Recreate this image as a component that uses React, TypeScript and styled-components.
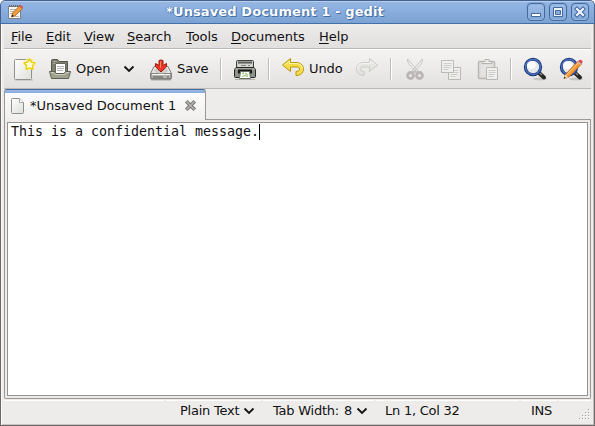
import React from "react";
import styled, { createGlobalStyle } from "styled-components";

const Global = createGlobalStyle`
  * { box-sizing: border-box; }
  html, body { margin: 0; padding: 0; background: #fff; overflow: hidden; }
  svg { display: block; flex: none; }
`;

const Window = styled.div`
  width: 595px;
  height: 426px;
  display: flex;
  flex-direction: column;
  overflow: hidden;
  border-radius: 5px 5px 0 0;
  background: #edeceb;
  color: #111;
  font: 13px/16px "DejaVu Sans", sans-serif;
  white-space: nowrap;
  cursor: default;
`;

const TitleBar = styled.header`
  height: 24px;
  flex: none;
  display: flex;
  align-items: center;
  padding: 0 5px 0 6px;
  border: 1px solid #44608c;
  border-bottom-color: #4470a9;
  border-radius: 5px 5px 0 0;
  background: linear-gradient(#b5cdee 0, #b5cdee 1px, #96b6e2 1px, #8bafdf 40%, #7ba2d2 100%);
`;

const Title = styled.h1`
  flex: 1;
  margin: 0;
  padding-right: 1px;
  text-align: center;
  font-size: 13px;
  line-height: 16px;
  font-weight: bold;
  letter-spacing: 0.11px;
  color: #fff;
  text-shadow: 1px 1px 0 #426da6, 0 0 1px #426da6, -1px 0 0 #668fc5;
`;

const WindowButtons = styled.div`
  display: flex;
  gap: 4px;
`;

const WindowButton = styled.button`
  width: 18px;
  height: 18px;
  padding: 0;
  border: 1px solid #43699f;
  border-radius: 4px;
  background: linear-gradient(#a0bfe8, #7fa5d6);
  box-shadow: inset 0 0 0 1px #94b5e1, 0 0 0 1px #85a9d9;
`;

const Body = styled.div`
  flex: 1;
  min-height: 0;
  display: flex;
  flex-direction: column;
  border: 1px solid #6b6867;
  border-top: 0;
  box-shadow: inset 1px 0 #fafafa, inset -1px -1px #c5c2c0;
  padding: 0 3px 1px;
`;

const MenuBar = styled.nav`
  height: 25px;
  flex: none;
  display: flex;
  gap: 14px;
  padding: 5px 0 0 7px;
  border-bottom: 1px solid #bab8b5;
  background: linear-gradient(#edeceb, #e1e0df);
`;

const MenuItem = styled.div<{ $w: number }>`
  width: ${(p) => p.$w}px;
  letter-spacing: -0.05px;
`;

const Mnemonic = styled.span`
  text-decoration: underline;
  text-decoration-thickness: 1px;
  text-underline-offset: 2px;
`;

const ToolBar = styled.div`
  height: 40px;
  flex: none;
  display: flex;
  align-items: center;
  padding-left: 8px;
  border-top: 1px solid #fff;
  border-bottom: 1px solid #bab8b5;
  background: linear-gradient(#f5f4f3, #e2e1e0);
`;

const ToolItem = styled.div<{ $w: number; $faded?: boolean }>`
  width: ${(p) => p.$w}px;
  height: 24px;
  flex: none;
  display: flex;
  align-items: center;
  gap: 4px;
  opacity: ${(p) => (p.$faded ? 0.55 : 1)};
`;

const ToolLabel = styled.span`
  letter-spacing: -0.1px;
`;

const Separator = styled.i`
  width: 2px;
  height: 22px;
  flex: none;
  border-left: 1px solid #bebbb8;
  border-right: 1px solid #fff;
`;

const TabStrip = styled.div`
  height: 31px;
  flex: none;
  display: flex;
`;

const Tab = styled.div`
  width: 202px;
  height: 31px;
  display: flex;
  align-items: center;
  padding: 1px 0 0 5px;
  border: 1px solid #9c9895;
  border-top-color: #49699a;
  border-bottom: 0;
  border-radius: 3px 3px 0 0;
  background: linear-gradient(#9dbce8 0, #84aadc 3px, #fcfcfc 3px, #f0efee 100%);
`;

const TabLabel = styled.span`
  width: 158px;
  padding-left: 4px;
  letter-spacing: -0.03px;
`;

const TabRest = styled.div`
  flex: 1;
  border-bottom: 1px solid #9c9895;
`;

const Notebook = styled.div`
  height: 279px;
  flex: none;
  padding: 2px;
  border: 1px solid #9c9895;
  border-top: 0;
  border-radius: 0 0 2px 2px;
`;

const Editor = styled.div`
  height: 274px;
  display: flex;
  align-items: flex-start;
  padding: 1px 2px 2px 3px;
  border: 1px solid #96928f;
  background: #fff;
  font: 13.3px/16px "DejaVu Sans Mono", monospace;
  letter-spacing: -0.007px;
`;

const Caret = styled.i`
  width: 1px;
  height: 16px;
  background: #000;
`;

const StatusBar = styled.footer`
  flex: 1;
  display: flex;
  margin-top: 1px;
  gap: 2px;
`;

const Status = styled.div<{ $w: number; $pad?: number }>`
  width: ${(p) => p.$w}px;
  flex: none;
  display: flex;
  gap: 4px;
  padding: 2px 0 0 ${(p) => p.$pad ?? 0}px;
  border-top: 1px solid #fff;
  letter-spacing: -0.24px;
`;

const StatusValue = styled.span`
  padding-left: 1px;
`;

const Grip = styled.div`
  flex: 1;
  display: flex;
  align-items: flex-end;
  justify-content: flex-end;
  padding-bottom: 3px;
  border-top: 1px solid #fff;
`;

const Chevron = () => (
  <svg width="12" height="16" viewBox="0 0 12 16">
    <path d="M1.5 5.5l4.5 4.5 4.5-4.5" fill="none" stroke="#151515" strokeWidth="1.9" />
  </svg>
);

const NotepadIcon = () => (
  <svg width="17" height="16" viewBox="0 0 17 16">
    <path d="M1.500 2.500h12v12h-12z" fill="#f7f7f3" stroke="#7c8082" />
    <path d="M2 2h11" stroke="#666" strokeDasharray="1 1" strokeWidth="2" />
    <path d="M3 5.500h7M3 7.500h5M3 9.500h3M8 12.500h4" stroke="#b7b7b4" />
    <path d="M4.500 13l1-4L12.500 2l3 2.500-7.500 7.500z" fill="#f39a3b" stroke="#9b5b21" strokeWidth=".7" />
    <path d="M12.300 2l1.300-1.300 2.700 2.300L15 4.300z" fill="#e04c50" />
    <path d="M4.500 13l.7-2.500 1.800 1.600z" fill="#29241f" />
  </svg>
);

const NewIcon = () => (
  <svg width="24" height="24" viewBox="0 0 24 24">
    <defs>
      <linearGradient id="sheet" x2="1" y2="1"><stop stopColor="#fff" /><stop offset="1" stopColor="#dededb" /></linearGradient>
    </defs>
    <path d="M3 23h18" stroke="#b9b8b5" />
    <rect x="2.5" y="2.5" width="17" height="20" rx="1" fill="url(#sheet)" stroke="#92928d" />
    <circle cx="17.5" cy="7" r="6" fill="#fff596" opacity=".65" />
    <path d="M17.500 2l1.800 3.100 3.600.8-2.400 2.700.4 3.700-3.400-1.400-3.300 1.400.3-3.700L12 5.900l3.700-.8z" fill="#fffce0" stroke="#ecd000" strokeWidth="1.4" strokeLinejoin="round" />
  </svg>
);

const OpenIcon = () => (
  <svg width="24" height="24" viewBox="0 0 24 24">
    <path d="M3.500 19V3.500q0-1 1-1h5l1.500 2h8.500V19z" fill="#7c7f6d" stroke="#54574a" />
    <path d="M5 4.500h4M5 6.500h13" stroke="#a4a698" />
    <path d="M7.500 6.500h10v10h-10z" fill="#fff" stroke="#676a5d" />
    <path d="M9 9.500h7M9 11.500h7M9 13.500h6" stroke="#b5b5ae" />
    <path d="M1.500 14.500h5l1.500 2h8l1.500-2h5L20.500 21.500h-17z" fill="#a0a38f" stroke="#5b5f50" strokeLinejoin="round" />
    <path d="M2.700 15.500h3.300l1.500 2h9l1.500-2h3.300" stroke="#c9ccbd" fill="none" />
  </svg>
);

const SaveIcon = () => (
  <svg width="24" height="24" viewBox="0 0 24 24">
    <path d="M2 22.500h20" stroke="#aaa9a6" strokeWidth="2" />
    <path d="M5 9.500h14l3.500 7V21q0 1-1 1h-19q-1 0-1-1v-4.500z" fill="#e4e4e1" stroke="#7e7f7b" />
    <path d="M2 16.500h20v5H2z" fill="#b4b5b0" stroke="#82837e" />
    <path d="M3 17.500h18" stroke="#f5f5f3" />
    <path d="M4 20h10M18 20h2" stroke="#565753" />
    <ellipse cx="12" cy="13.5" rx="7" ry="3" fill="#cdcdc8" />
    <path d="M10 3.500q2-1 4 0v5l3.500-2v3.200L12 15 6.500 9.700V6.500l3.500 2z" fill="#ee3827" stroke="#9c160d" />
    <path d="M11.500 4v7" stroke="#ff8062" />
  </svg>
);

const PrintIcon = () => (
  <svg width="24" height="24" viewBox="0 0 24 24">
    <path d="M2 22.500h20" stroke="#b5b3b0" />
    <rect x="3.5" y="3.5" width="17" height="8" rx="1" fill="#c4c6c0" stroke="#41443f" />
    <path d="M5 5.500h14" stroke="#5f645e" strokeWidth="2" />
    <path d="M5 8.500h14" stroke="#dee0d9" strokeWidth="2" />
    <path d="M8 8.500h5M15 8.500h2" stroke="#7e837b" />
    <path d="M3 10.500h18l1.500 2v7q0 1-1 1h-19q-1 0-1-1v-7z" fill="#8e918b" stroke="#252824" />
    <path d="M2.500 12h19" stroke="#b9bbb5" />
    <path d="M5 12.500h14v4H5z" fill="#171917" />
    <path d="M7.500 14.500h9l1 7h-11z" fill="#fff" stroke="#686d64" />
    <path d="M9 16.500l2-.5M12 16l3 2M9 19.500l3-1 3 1" fill="none" stroke="#99c47a" strokeWidth="1.3" />
  </svg>
);

const UndoIcon = ({ forward = false }) => (
  <svg width="24" height="24" viewBox="0 0 24 24">
    <g transform={forward ? "translate(24 0) scale(-1 1)" : undefined}>
      <path d="M9.500 1.500v4H15c5 0 7.500 3 7.500 6.500 0 4-3 6.500-7.500 6.500v-4c2.500 0 3.500-1 3.500-2.500S17.500 10 15 10H9.500v4.500L1.500 8z" fill={forward ? "#dedfd9" : "#f4dc4b"} stroke={forward ? "#adb0a8" : "#b99708"} strokeLinejoin="round" />
      <path d="M8.500 4v2.500H15c4 0 6.500 2.500 6.500 6M3.500 8l4-3" fill="none" stroke={forward ? "#fff" : "#fff7a8"} />
    </g>
  </svg>
);

const CutIcon = () => (
  <svg width="24" height="24" viewBox="0 0 24 24">
    <path d="M4.500 2c-.3 3 1.500 6 5 9l4 5 1.500-2zM19.500 2c.3 3-1.500 6-5 9l-4 5-1.500-2z" fill="#f2f2ef" stroke="#a3a39e" />
    <g fill="none" stroke="#978d8d" strokeWidth="2.8"><circle cx="7.5" cy="18.5" r="3" /><circle cx="16.5" cy="18.5" r="3" /></g>
    <path d="M10 16l2-2 2 2" fill="none" stroke="#a49b9a" strokeWidth="2" />
  </svg>
);

const CopyIcon = () => (
  <svg width="24" height="24" viewBox="0 0 24 24">
    {[[9.5, 10.5], [2.5, 3.5]].map(([x, y]) => (
      <g key={x} transform={`translate(${x} ${y})`}>
        <path d="M0 0h12v12H0z" fill="#f4f4f1" stroke="#92928c" />
        <path d="M2 3h8M2 5h8M2 7h7M2 9h5" stroke="#b5b5b0" />
      </g>
    ))}
  </svg>
);

const PasteIcon = () => (
  <svg width="24" height="24" viewBox="0 0 24 24">
    <rect x="2.5" y="4.5" width="16" height="17" rx="1" fill="#d7d5d1" stroke="#91908b" strokeWidth="1.5" />
    <path d="M6 6.500V4.500h3v-2h4v2h3v2z" fill="#e9e9e5" stroke="#85867f" />
    <path d="M5 8h11v11H5z" fill="#dfdfdc" />
    <path d="M10.500 10.500h11v12h-11z" fill="#f5f5f2" stroke="#92928c" />
    <path d="M12.500 13.500h7M12.500 15.500h7M12.500 17.500h6M12.500 19.500h5" stroke="#b5b5b0" />
  </svg>
);

const FindIcon = ({ replace = false }) => (
  <svg width="24" height="24" viewBox="0 0 24 24">
    <ellipse cx="17" cy="22" rx="7" ry="1.5" fill="#c7c5c3" />
    <path d="M15.500 15.500l5.500 5" stroke="#262824" strokeWidth="4" strokeLinecap="round" />
    <path d="M15.500 15l3.500 3" stroke="#8d908b" strokeWidth="1.2" />
    <circle cx="10" cy="10" r="7.7" fill="#e7e8e8" stroke="#1e3979" strokeWidth="3" />
    <circle cx="10" cy="10" r="7.5" fill="none" stroke="#4b70bf" strokeWidth="1.4" />
    <ellipse cx="8.5" cy="8" rx="4.5" ry="4" fill="#fff" opacity=".85" />
    {replace && (
      <>
        <path d="M5 21.500l1.500-4L19 4l3.500 3L10 20z" fill="#f49a36" stroke="#aa5b17" strokeWidth=".8" />
        <path d="M7.500 18L19.500 5.500" stroke="#ffd08b" />
        <path d="M18.500 4.700l1.500-1.500q2-1 3.500 1 .5 1-1.300 3z" fill="#e24650" />
        <path d="M18 5l1-1 3.500 3-1 1z" fill="#bfc0bd" />
        <path d="M4.700 21.800l1.500-4.300 3.300 2.800z" fill="#ead6ac" />
        <path d="M4.700 21.800l.7-2 1.500 1z" fill="#222" />
      </>
    )}
  </svg>
);

const PageIcon = () => (
  <svg width="16" height="16" viewBox="0 0 16 16">
    <defs>
      <linearGradient id="page" x2="1" y2="1"><stop stopColor="#fff" /><stop offset="1" stopColor="#dcdfd9" /></linearGradient>
    </defs>
    <path d="M2.500.5h7l4 4v10q0 1-1 1h-10q-1 0-1-1v-13q0-1 1-1z" fill="url(#page)" stroke="#8e908a" />
    <path d="M9.500.5v4h4" fill="#fff" stroke="#a7a8a3" />
  </svg>
);

const CloseIcon = () => (
  <svg width="13" height="13" viewBox="0 0 13 13">
    <path d="M2.200 2.200l8.600 8.600M10.800 2.200l-8.600 8.600" stroke="#777572" strokeWidth="3.6" />
    <path d="M2.500 2.500l8 8M10.500 2.500l-8 8" stroke="#b4b2af" strokeWidth="1.6" />
  </svg>
);

const MinimizeGlyph = () => (
  <svg width="16" height="16" viewBox="0 0 16 16"><path d="M3.500 9.500h9v3h-9z" fill="#fff" stroke="#43699f" /></svg>
);

const MaximizeGlyph = () => (
  <svg width="16" height="16" viewBox="0 0 16 16">
    <path d="M3.500 3.500h9v9h-9z" fill="#edf3fb" stroke="#43699f" />
    <path d="M5.500 6.500h5v4h-5z" fill="#8aaddd" stroke="#43699f" />
  </svg>
);

const CloseGlyph = () => (
  <svg width="16" height="16" viewBox="0 0 16 16">
    <path d="M5 5l6 6M11 5l-6 6" stroke="#43699f" strokeWidth="4.2" strokeLinecap="square" />
    <path d="M5 5l6 6M11 5l-6 6" stroke="#f1f5fb" strokeWidth="2.2" strokeLinecap="square" />
  </svg>
);

const GripDots = () => (
  <svg width="12" height="12" viewBox="0 0 12 12">
    {[[9, 0], [6, 3], [9, 3], [3, 6], [6, 6], [9, 6], [0, 9], [3, 9], [6, 9], [9, 9]].map(([x, y]) => (
      <g key={`${x}-${y}`}>
        <rect x={x + 1} y={y + 1} width="1" height="1" fill="#fff" />
        <rect x={x} y={y} width="1" height="1" fill="#a09c99" />
      </g>
    ))}
  </svg>
);

const menus: [string, number][] = [
  ["File", 21], ["Edit", 24], ["View", 29], ["Search", 45], ["Tools", 31], ["Documents", 74], ["Help", 30],
];

export default function App() {
  return (
    <Window>
      <Global />
      <TitleBar>
        <NotepadIcon />
        <Title>*Unsaved Document 1 - gedit</Title>
        <WindowButtons>
          <WindowButton aria-label="Minimize"><MinimizeGlyph /></WindowButton>
          <WindowButton aria-label="Maximize"><MaximizeGlyph /></WindowButton>
          <WindowButton aria-label="Close"><CloseGlyph /></WindowButton>
        </WindowButtons>
      </TitleBar>
      <Body>
        <MenuBar>
          {menus.map(([name, width]) => (
            <MenuItem key={name} $w={width}><Mnemonic>{name[0]}</Mnemonic>{name.slice(1)}</MenuItem>
          ))}
        </MenuBar>
        <ToolBar>
          <ToolItem $w={36}><NewIcon /></ToolItem>
          <ToolItem $w={75}><OpenIcon /><ToolLabel>Open</ToolLabel></ToolItem>
          <ToolItem $w={26}><Chevron /></ToolItem>
          <ToolItem $w={71}><SaveIcon /><ToolLabel>Save</ToolLabel></ToolItem>
          <Separator />
          <ToolItem $w={11} />
          <ToolItem $w={35}><PrintIcon /></ToolItem>
          <Separator />
          <ToolItem $w={11} />
          <ToolItem $w={74}><UndoIcon /><ToolLabel>Undo</ToolLabel></ToolItem>
          <ToolItem $w={35} $faded><UndoIcon forward /></ToolItem>
          <Separator />
          <ToolItem $w={11} />
          <ToolItem $w={36} $faded><CutIcon /></ToolItem>
          <ToolItem $w={37} $faded><CopyIcon /></ToolItem>
          <ToolItem $w={34} $faded><PasteIcon /></ToolItem>
          <Separator />
          <ToolItem $w={11} />
          <ToolItem $w={36}><FindIcon /></ToolItem>
          <ToolItem $w={24}><FindIcon replace /></ToolItem>
        </ToolBar>
        <TabStrip>
          <Tab><PageIcon /><TabLabel>*Unsaved Document 1</TabLabel><CloseIcon /></Tab>
          <TabRest />
        </TabStrip>
        <Notebook>
          <Editor>This is a confidential message.<Caret /></Editor>
        </Notebook>
        <StatusBar>
          <Status $w={160} />
          <Status $w={95} $pad={14}>Plain Text<Chevron /></Status>
          <Status $w={111} $pad={10}><span>Tab Width:</span><StatusValue>8</StatusValue><Chevron /></Status>
          <Status $w={143} $pad={9}>Ln 1, Col 32</Status>
          <Status $w={36} $pad={10}>INS</Status>
          <Grip><GripDots /></Grip>
        </StatusBar>
      </Body>
    </Window>
  );
}
